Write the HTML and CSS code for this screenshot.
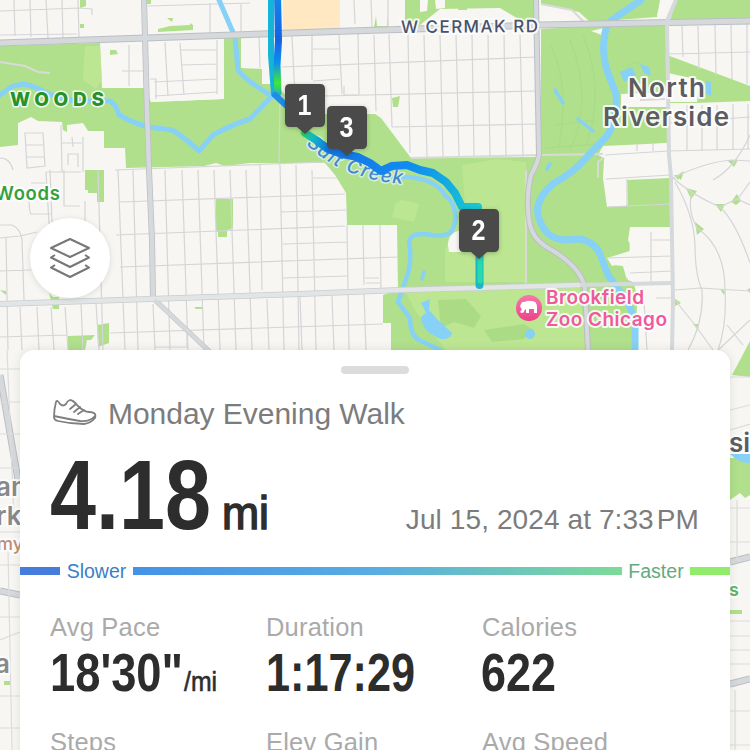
FILE: index.html
```html
<!DOCTYPE html>
<html lang="en">
<head>
<meta charset="utf-8">
<title>Monday Evening Walk</title>
<link rel="stylesheet" href="styles.css">
</head>
<body>
<main class="screen">
<svg class="map" viewBox="0 0 750 750" aria-label="Route map">
  <defs>
    <linearGradient id="trail" gradientUnits="userSpaceOnUse" x1="300" y1="130" x2="480" y2="210">
      <stop offset="0" stop-color="#2fe04a"/><stop offset=".08" stop-color="#12b5c9"/><stop offset=".17" stop-color="#1573e2"/>
      <stop offset=".6" stop-color="#118df0"/><stop offset="1" stop-color="#18cbd0"/>
    </linearGradient>
    <linearGradient id="north" gradientUnits="userSpaceOnUse" x1="0" y1="0" x2="0" y2="100">
      <stop offset="0" stop-color="#1583e9"/><stop offset=".4" stop-color="#1262e6"/><stop offset=".63" stop-color="#0d90ee"/>
      <stop offset=".83" stop-color="#43e832"/><stop offset="1" stop-color="#149be8"/>
    </linearGradient>
    <linearGradient id="zoo" x1="0" y1="0" x2="0" y2="1"><stop offset="0" stop-color="#f877ad"/><stop offset="1" stop-color="#ed4289"/></linearGradient>
  </defs>
  <rect width="750" height="750" fill="#f7f6f3"/>
  <path fill="#ffe8c2" d="M283 0h57v29l-57 2z"/>

  <g fill="#b1e08c">
    <path d="M0 46L100 43L102 88L121 87L144 88L151 102L224 99V36H241V68L262 69V84L275 84L290 100L325 114H375L381 118L411 158L537 157L541 155V29L667 22V55L750 86V101L695 103H668V143L603 146L598 155L608 160L603 178L607 207L628 205L627 180L670 178V227H630L628 240L633 250L607 258L612 266L622 263L628 280L638 284L635 350H391V323H383V295L398 290L397 225H347L346 193L335 175L325 163L250 163L225 166L216 163L204 166L126 168L125 148H104V131L88 131L83 123L67 125V132L63 130L62 122L38 121L31 117L18 123V145L0 147z"/>
    <path d="M405 0H535V25L520 20L500 8L440 9L430 17L420 25L405 24zM541 0H660L657 17L590 22L579 12L541 4zM676 0H750V19L670 21z"/>
    <path d="M158 29l12-3 20-1v-2l3 2v5l-35 2zM167 18h6l-1 4zM80 0h6v6l-6 2zM80 24h4v4h-4zM110 50h6l2 4-8 1zM147 0h4v4h-4z"/>
    <path d="M85 170h19v32h-7v-9h-9v-3h-3zM216 199h17v30l-6 1v7h-9v-5h-2zM49 293l4 4h6v12h-6zM68 336l27-1-4 5h-4l-2 10H68zM97 325l12-2v20l-11 4zM194 307h8v2h-6zM0 290l6 1v4z"/>
    <path d="M392 98l8-2-2 11-5 0zM374 27l2-11 1 10h10l1-11v12h-14zM458 3h9v7h-9z"/>
    <path d="M674 175l7 0-3 5zM686 188l11 3-6 8zM715 204l10 0-4 8zM731 202l6-8 4 7-5 4zM695 222l9 7-7 6zM674 298l7 5-6 3zM720 289l5 2-1 4zM747 290l3-2v5zM693 324l6 0-1 6zM727 160h11l-4 7zM676 176l8-5-3 9z"/>
    <path d="M750 341L732 375L750 377zM730 458h20v37l-5 3-5-5-10 7zM730 610h12v4h-12zM4 681h7v4H4z"/>
  </g>
  <g fill="#c1e896">
    <path d="M85 46h15l2 33-6 10-13-9zM396 203l6-3 17 4-5 18-22-5zM462 165l35-6 29 3v120h-81V250l20-45zM405 290l175-4 6 64H446l-30-38z" opacity=".75"/>
    <path d="M605 112l60-3v6h-60z"/>
  </g>
  <g fill="#a6d982">
    <path d="M438 300l28-1 15 17-7 12-20-6-13 6zM484 330l40-6 8 5-8 10-32 3z" opacity=".8"/>
  </g>
  <g fill="none" stroke="#a5da86" stroke-width="1.5" opacity=".7">
    <path d="M550 45q20 35 9 102M570 40q24 60 0 110M583 35q22 55 4 108M545 148l55-4M555 125l40-5M625 70q12-16 21 1"/>
  </g>
  <g fill="#f8f7f4">
    <path d="M121 36L221 37V99L151 102V55H102V88L145 88V45L101 46L103 42z"/>
    <path d="M544 9L580 21L544 23zM591 31l13-3-2 7zM621 94l46-2v15h-46zM605 148l63-5v35H603l1-19 8-6zM607 180h14l5 12v14h-18zM609 260h18v20l-4-14-10-1zM630 229h42v121H640V308l-6-24-5-6z"/>
    <path d="M668 73l32 7-3 22h-29zM448 245q0-13 14-15v22h-13zM657 15l7-1 6-14h-8zM420 0h8l-1 11-7 1zM435 0h10v8l-9 1z"/>
  </g>

  <g fill="none" stroke="#d5d5d8" stroke-width="1.2">
    <path d="M14 0l1 36M30 0l1 37M46 0l2 38M62 0l1 38M78 0l1 38M0 11L80 8L92 9V15M0 35L77 34M148 6L250 3M210 3V33"/>
    <path d="M241 4V34M259 33L260 68M129 45v41M122 71h22M165 42L168 96M180 43L184 95M217 40V94M180 50H217M181 65L217 64M154 82L217 79M155 96L217 92M150 79h6v20"/>
    <path d="M25 133h18l2 33-18 2zM26 145h18M27 157h17M61 125l1 47M62 143h20M72 137l1 10M68 165v-11h10v13M46 172h35M83 137v35M0 158q10 0 13 12M31 183h14M29 194q0 18 2 20h20M46 172L50 240"/>
    <path d="M354 0l1 24M371 0l1 29M388 0v28M292 36L296 118M312 35V80M339 35L342 94M282 67L537 57M313 49H340M313 81L340 79M282 97L537 91M392 127L537 124"/>
    <path d="M358 32L359 95M374 35l2 76M389 34l3 93M408 33l2 120M424 35l3 122M440 35l3 122M456 35l3 122M472 35l2 122M488 35l2 122M504 35l2 122M520 35l3 122M344 86v9h14"/>
    <path d="M682 26l1 31M698 26l1 43M715 25l1 50M731 24l1 56M747 24v60M668 54L750 52M687 105v45M702 105v46M717 105v45M733 104v46M748 104v45M668 123L750 117M605 155L668 151L750 149M637 144v7M653 143v8"/>
    <path d="M115 170L325 162M280 95L279 165M260 165L262 290M280 165L284 350M296 165L299 350M312 170L316 350M120 202L345 194M116 235L345 226M120 267L398 257M313 178H337M281 212L347 210M283 244L347 242M283 278L347 276M347 225l2 125M363 225l1 60M380 225l1 65M365 278h14M366 283h14"/>
    <path d="M98 170L103 350M118 170L125 350M133 170L138 350M165 170L170 350M182 170L188 350M198 170L204 350M214 170L220 350M230 170L236 350M246 170L252 350M85 201V225M50 170L52 222M64 170V206H80"/>
    <path d="M0 225H12Q21 229 22 240L24 300M0 238L20 236L37 232M0 271L31 270M6 238L8 350M20 307L22 350M37 307L39 350M51 307L54 350M65 307L68 350M81 303L83 350M96 303L99 350M0 337L67 335M110 333L383 324M155 347h32v-18"/>
    <path d="M267 299L269 350M300 297L302 350M332 296L334 350M364 294L366 350M153 304L155 350M606 179L670 175M608 207L670 204M607 258L672 256M630 273L672 271M651 232v53M652 240h20M627 179v28M644 300l3 50M656 298h15"/>
    <path d="M672 177Q690 194 720 207Q736 222 750 263M692 192Q687 210 697 228Q725 247 725 290Q727 325 718 350M675 182Q694 215 695 245Q695 275 702 290Q704 322 688 350M720 207L737 199L750 205M737 200L750 182M675 290L700 288L750 291M675 300L695 325L713 350M727 325L743 345M673 178Q705 162 732 160L750 161M713 355L750 320M713 180Q735 168 750 135"/>
  </g>
  <g fill="none" stroke="#d9dad8" stroke-width="2">
    <path d="M0 62L25 66L38 72L50 73M411 158L541 155L603 154M526 170V283M541 4L572 10L585 23M598 178V162L603 158M640 100l25-1"/>
  </g>

  <g fill="none" stroke="#86d1f5" stroke-linejoin="round" stroke-linecap="round">
    <path stroke-width="5" d="M0 95L13 86L24 84Q37 87 48 94L75 101L110 101Q116 104 119 115Q131 122 148 127L172 130Q184 137 199 151L213 135Q231 125 250 119L272 96"/>
    <path stroke-width="5" d="M219 0L235 37L238 70Q245 80 272 96"/>
    <path stroke-width="7" d="M641 0L616 17Q606 23 605 33Q601 54 608 73L616 94Q618 119 607 136L586 158Q573 173 554 183Q535 199 538 215Q544 239 565 240L580 239Q597 243 601 257L608 275L621 293Q632 306 635 325V350"/>
    <path stroke-width="4.5" d="M392 177Q433 175 445 195Q459 206 454 226Q451 238 432 235Q411 231 409 242Q413 263 405 282L398 302L410 318Q410 335 419 340L440 350"/>
    <path stroke-width="3.5" d="M555 90l8 13M578 119l15 12M550 164l-3 5M424 272l-2 7"/>
  </g>
  <g fill="#86d1f5"><path d="M421 303l9-4-1 11 8 9 15 14q-1 7-12 6l-12-7q-7-8-7-15l5-4zM620 72l12-5 4 8-12 7zM640 64l9 3 2 9-7-3zM706 81l5 1v14l-5-2z"/><circle cx="530" cy="334" r="5"/><path d="M730 454h20v9q-10 1-20-9z"/></g>

  <g fill="none" stroke-linejoin="round">
    <g stroke="#bbbfc4">
      <path stroke-width="7" d="M0 43L145 38L350 31L540 25L750 21"/>
      <path stroke-width="6" d="M144 0L147 110L149 170L152 240L153 300"/>
      <path stroke="#c9cdcf" stroke-width="6" d="M0 304L150 299L300 294L400 290L580 285"/>
      <path stroke-width="6" d="M536 0L539 155Q537 165 531 175Q525 202 530 225Q533 238 545 246Q583 267 585 290L588 350"/>
      <path stroke-width="5" d="M155 300L210 352"/>
      <path stroke-width="7" d="M0 375L18 480M0 591L20 595M730 562L750 557M730 684L750 679"/>
    </g>
    <g stroke="#d5d9db">
      <path stroke-width="5" d="M0 43L145 38L350 31L540 25L750 21"/>
      <path stroke-width="4.5" d="M144 0L147 110L149 170L152 240L153 300"/>
      <path stroke="#e2e5e5" stroke-width="4.5" d="M0 304L150 299L300 294L400 290L580 285"/>
      <path stroke-width="4" d="M536 0L539 155Q537 165 531 175Q525 202 530 225Q533 238 545 246Q583 267 585 290L588 350M155 300L210 352M580 285L672 283"/>
      <path stroke-width="4" d="M676 0L667 21L669 155L671 177L673 300L672 350"/>
      <path stroke-width="5" d="M0 375L18 480M0 591L20 595M730 562L750 557M730 684L750 679"/>
    </g>
  </g>
  <g fill="none" stroke="#dcdcdc" stroke-width="1.2"><path d="M0 369H20M0 402H20M0 434H20M0 468H20M7 350L14 520M0 532H20M0 565H20M8 550L12 750M0 617H20M0 640L20 632M0 696H20M0 728H20M730 377H750M730 410L750 405M730 430L750 424M730 508H750M730 542H750M737 500V560M730 621H750M730 636H750M730 650H750M730 664H750M730 711H750M730 745H750M735 690V750"/></g>

  <g class="label label-creek"><path id="creek" d="M306 144Q329 167 361 176Q384 184 412 184" fill="none"/><text><textPath href="#creek" textLength="107">Salt Creek</textPath></text></g>

  <g fill="none" stroke-linecap="round" stroke-linejoin="round">
    <path stroke="#15b5d8" stroke-width="6" d="M271 -5L271 55L274 94"/>
    <path stroke="url(#north)" stroke-width="7" d="M277.500 -5L278.500 40L277 65L278 93"/>
    <path stroke="#218bea" stroke-width="6" d="M275 95L292 111"/>
    <path stroke="url(#trail)" stroke-width="8" d="M305 133L316 140L328 149L342 154L358 157L370 163L381 171L392 166L407 165L420 170L433 173L446 182L455 193L462 207H478"/>
    <path stroke="#1eb6c7" stroke-width="8" d="M479.500 250V285"/><path stroke="#27dba9" stroke-width="5" d="M480 250V281"/>
  </g>

  <g class="label label-woods"><text x="10" y="106" textLength="94">WOODS</text></g>
  <text class="label label-park" x="-5" y="200" textLength="65">Woods</text>
  <text class="label label-road" x="401" y="33" textLength="137" transform="rotate(-.4 401 33)">W CERMAK RD</text>
  <g class="label label-city"><text x="628" y="97" textLength="77">North</text><text x="603" y="126" textLength="126">Riverside</text><text x="729" y="452">si</text></g>
  <g class="label label-city label-far"><text x="-4" y="496">an</text><text x="-4" y="525">rk</text><text x="-5" y="673">a</text></g>
  <g class="label label-zoo"><text x="546" y="304" textLength="98">Brookfield</text><text x="546" y="326" textLength="121">Zoo Chicago</text></g>
  <text class="label label-rail" x="-3" y="550">my</text>
  <text class="label label-small" x="729" y="596">s</text>
  <circle cx="529" cy="308" r="13" fill="url(#zoo)"/>
  <path fill="#fff" d="M521 304q1-3 4-2q2-2 5-1q7-1 7 6v6h-3v-4h-5v4h-3v-4q-2 1-2 3q-2 2-4 0l2-3q-3-2-1-5z"/>

  <g class="pin">
    <path d="M290 84h30q5 0 5 5v33q0 5-5 5h-7l-8 7-8-7h-7q-5 0-5-5V89q0-5 5-5z"/><text x="304.500" y="115" textLength="14" lengthAdjust="spacingAndGlyphs">1</text>
    <path d="M332 106h30q5 0 5 5v33q0 5-5 5h-7l-8 7-8-7h-7q-5 0-5-5v-33q0-5 5-5z"/><text x="346.500" y="137" textLength="14" lengthAdjust="spacingAndGlyphs">3</text>
    <path d="M464 209h30q5 0 5 5v33q0 5-5 5h-7l-8 7-8-7h-7q-5 0-5-5v-33q0-5 5-5z"/><text x="478.500" y="240" textLength="14" lengthAdjust="spacingAndGlyphs">2</text>
  </g>
</svg>

<button class="layers" aria-label="Map layers">
  <svg viewBox="0 0 42 42"><path d="M21 2L40 11L21 20L2 11zM6 18L2 20.500L21 30L40 20.500L36 18M6 28L2 30.500L21 40L40 30.500L36 28"/></svg>
</button>

<section class="sheet">
  <div class="handle"></div>
  <header class="title">
    <svg class="shoe" viewBox="0 0 44 26"><path d="M3 3Q1 10 1 18Q1 21 5 22Q18 25 31 25Q38 24 42 19Q44 13 36 13Q31 13 25 7Q20 1 17 1Q14 2 13 5Q10 8 7 5Q4 0 3 3zM1 17Q15 20 27 22Q37 23 42 17M17 10L23 5M21 13L27 8M25 15L31 11"/></svg>
    <h1>Monday Evening Walk</h1>
  </header>
  <div class="summary">
    <div class="distance">
      <svg class="figure" width="162" height="76"><text x="0" y="74" font-size="98" textLength="161" lengthAdjust="spacingAndGlyphs">4.18</text></svg>
      <svg class="figure unit" width="50" height="46"><text x="0" y="44" font-size="46" textLength="47" lengthAdjust="spacingAndGlyphs">mi</text></svg>
    </div>
    <time>Jul 15, 2024 at 7:33<span class="meridiem">PM</span></time>
  </div>
  <div class="pace">
    <i class="bar bar-slow"></i><span class="slower">Slower</span><i class="bar bar-mid"></i><span class="faster">Faster</span><i class="bar bar-fast"></i>
  </div>
  <div class="stats">
    <div><h2>Avg Pace</h2><svg class="figure" width="180" height="44"><text x="0" y="42" font-size="53" textLength="133" lengthAdjust="spacingAndGlyphs">18'30"</text><text class="per" x="134" y="42" font-size="27" textLength="33" lengthAdjust="spacingAndGlyphs">/mi</text></svg></div>
    <div><h2>Duration</h2><svg class="figure" width="160" height="44"><text x="0" y="42" font-size="53" textLength="149" lengthAdjust="spacingAndGlyphs">1:17:29</text></svg></div>
    <div><h2>Calories</h2><svg class="figure" width="100" height="44"><text x="-1" y="42" font-size="53" textLength="75" lengthAdjust="spacingAndGlyphs">622</text></svg></div>
    <div><h2>Steps</h2></div>
    <div><h2>Elev Gain</h2></div>
    <div><h2>Avg Speed</h2></div>
  </div>
</section>
</main>
</body>
</html>
```
FILE: styles.css
```css
* { box-sizing: border-box; }
body { margin: 0; font-family: "Liberation Sans", sans-serif; }
.screen { position: relative; width: 750px; height: 750px; overflow: hidden; padding: 350px 20px 0; }
.map { position: absolute; left: 0; top: 0; width: 750px; height: 750px; }
.label { font-family: Inter, sans-serif; font-weight: 600; paint-order: stroke; stroke: rgba(255,255,255,.85); stroke-width: 4px; stroke-linejoin: round; }
.label-creek { font-size: 19px; font-style: italic; font-weight: 500; fill: #4388cd; stroke: #d5efdd; stroke-width: 3px; }
.label-creek path { stroke: none; }
.label-woods { font-size: 19px; font-weight: 800; fill: #27912a; stroke-width: 3px; }
.label-park { font-size: 18.500px; fill: #36a03b; }
.label-road { font-size: 17px; font-weight: 500; fill: #49516b; }
.label-city { font-size: 26px; fill: #5c5c61; }
.label-far { fill: #89898c; }
.label-zoo { font-size: 19px; fill: #f0599b; }
.label-rail { font-size: 18px; font-weight: 500; fill: #bd8c77; }
.label-small { font-size: 18px; fill: #63b36b; }
.pin { fill: #4a4a4a; filter: drop-shadow(0 1px 2px rgba(0,0,0,.25)); }
.pin text { fill: #fff; font: bold 29px "Liberation Sans", sans-serif; text-anchor: middle; }
.layers { position: absolute; left: 30px; top: 218px; width: 80px; height: 80px; padding: 19px; border: 0; border-radius: 50%; background: #fff; box-shadow: 0 1px 6px rgba(0,0,0,.12); }
.layers svg { display: block; width: 42px; height: 42px; fill: none; stroke: #777; stroke-width: 2; stroke-linejoin: round; }
.sheet { position: relative; height: 420px; padding-top: 16px; background: #fff; border-radius: 14px 14px 0 0; box-shadow: 0 0 10px rgba(0,0,0,.1); color: #2d2d2d; }
.handle { width: 68px; height: 8px; margin: 0 auto; border-radius: 4px; background: #dcdcdc; }
.title { display: flex; align-items: center; gap: 11px; height: 40px; margin: 20px 30px 0 33px; }
.shoe { width: 44px; height: 26px; margin-top: -4px; fill: none; stroke: #7f7f7f; stroke-width: 1.8; stroke-linejoin: round; stroke-linecap: round; }
h1, h2 { margin: 0; font-weight: 400; white-space: nowrap; }
h1 { font-size: 30px; letter-spacing: -.03px; color: #7c7c7c; }
.summary { display: flex; justify-content: space-between; align-items: flex-end; height: 97px; padding: 0 31px 0 30px; }
.distance { display: flex; align-items: flex-end; gap: 10px; }
.figure { display: block; overflow: visible; fill: #2d2d2d; font-weight: 700; }
.unit { font-weight: 400; stroke: #2d2d2d; stroke-width: 1.5px; }
time { font-size: 28px; line-height: 32px; letter-spacing: .1px; color: #7c7c7c; white-space: nowrap; margin-bottom: -5px; }
.meridiem { margin-left: 3px; }
.pace { display: flex; align-items: center; height: 24px; margin-top: 28px; font-size: 19.500px; }
.bar { height: 8px; }
.bar-slow { width: 40px; background: #467ddc; }
.bar-mid { flex: 1; background: linear-gradient(90deg, #4492e6, #58ade2 50%, #7eda99); }
.bar-fast { width: 40px; background: #92ec6b; }
.slower { width: 73px; text-align: center; color: #397fc8; }
.faster { width: 68px; text-align: center; color: #62ab7e; }
.stats { display: grid; grid-template-columns: repeat(3, 216px); grid-auto-rows: 115px; padding: 29px 0 0 30px; }
h2 { height: 37px; font-size: 25.500px; line-height: 30px; letter-spacing: .2px; color: #aaa; }
.per { font-weight: 400; stroke: #2d2d2d; stroke-width: .6px; }
```
